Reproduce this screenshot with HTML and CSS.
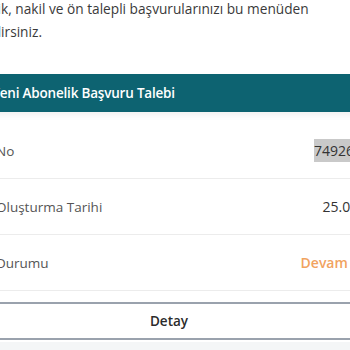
FILE: index.html
```html
<!DOCTYPE html>
<html lang="tr">
<head>
<meta charset="utf-8">
<link rel="stylesheet" href="styles.css">
</head>
<body>
  <p class="intro">Yeni abonelik, nakil ve ön talepli başvurularınızı bu menüden takip edebilirsiniz.</p>
  <div class="card">
    <div class="card-title">Yeni Abonelik Başvuru Talebi</div>
    <div class="card-body">
      <div class="row">
        <span class="label">No</span>
        <span class="value"><span class="mark">7492638419</span></span>
      </div>
      <div class="row">
        <span class="label">Oluşturma Tarihi</span>
        <span class="value">25.04.2023</span>
      </div>
      <div class="row">
        <span class="label">Durumu</span>
        <span class="value status">Devam Ediyor</span>
      </div>
      <div class="actions">
        <button class="detail-btn">Detay</button>
      </div>
    </div>
  </div>
  <div class="footer"></div>
</body>
</html>
```
FILE: styles.css
```css
html, body {
  margin: 0;
  padding: 0;
  background: #ffffff;
}
body {
  font-family: "Open Sans", Lato, sans-serif;
  width: 350px;
  height: 350px;
  overflow: hidden;
}
.intro {
  margin: -3px 0 0 -73px;
  width: 400px;
  text-indent: -4px;
  font-size: 13.7px;
  line-height: 23px;
  color: #3a3a3a;
}
.card {
  margin-top: 31px;
  margin-left: -40px;
  width: 500px;
}
.card-title {
  height: 38px;
  background: #0d6371;
  color: #ffffff;
  font-size: 13.5px;
  letter-spacing: -0.2px;
  font-weight: 600;
  display: flex;
  align-items: center;
  padding-left: 32px;
  box-shadow: 0 3px 6px rgba(0, 0, 0, 0.06);
}
.card-body {
  padding-top: 11px;
  padding-left: 36px;
  padding-right: 66px;
}
.row {
  height: 55px;
  display: flex;
  align-items: center;
  justify-content: space-between;
  border-bottom: 1px solid #ececec;
}
.label {
  font-size: 13.5px;
  color: #555555;
}
.value {
  font-size: 14px;
  color: #333333;
}
.mark {
  background: #c9c9c9;
  padding: 2px 0;
}
.status {
  color: #f1a35f;
  font-weight: 600;
}
.actions {
  margin: 11px 0 0 -100px;
}
.detail-btn {
  display: block;
  width: 546px;
  height: 38px;
  background: #ffffff;
  border: none;
  border-top: 2px solid #9aa2ad;
  border-bottom: 2px solid #9aa2ad;
  font-family: "Open Sans", Lato, sans-serif;
  font-size: 13.5px;
  font-weight: 600;
  color: #2b2b2b;
}
.footer {
  margin-top: 2px;
  height: 40px;
  background: #f4f6f7;
}
```
